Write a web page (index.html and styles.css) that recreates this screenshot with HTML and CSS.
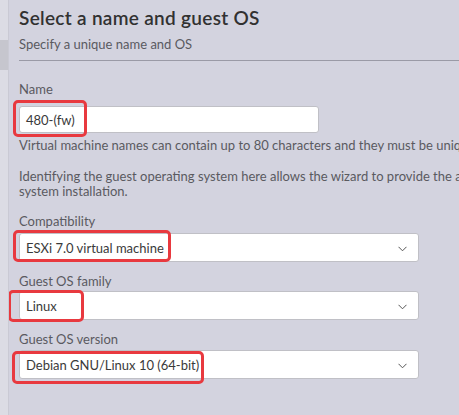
FILE: index.html
```html
<!DOCTYPE html>
<html>
<head>
<meta charset="utf-8">
<link rel="stylesheet" href="styles.css">
</head>
<body>
<div class="page">
  <aside class="rail"><div class="rail-block"></div></aside>
  <main class="content">
    <h1 class="title">Select a name and guest OS</h1>
    <p class="subtitle">Specify a unique name and OS</p>
    <div class="rule"></div>

    <div class="field field-name">
      <label class="label">Name</label>
      <div class="control">
        <div class="input text-input">480-(fw)</div>
        <span class="mark mark-name"></span>
      </div>
    </div>
    <p class="help help-name">Virtual machine names can contain up to 80 characters and they must be unique within each vCenter Server VM folder.</p>
    <p class="help help-os">Identifying the guest operating system here allows the wizard to provide the appropriate defaults for the operating<br>system installation.</p>

    <div class="field field-compat">
      <label class="label">Compatibility</label>
      <div class="control">
        <div class="input select">ESXi 7.0 virtual machine<svg class="chev" width="9" height="6" viewBox="0 0 9 6"><path d="M0.5 0.8 L4.5 4.8 L8.5 0.8" fill="none" stroke="#555" stroke-width="1"/></svg></div>
        <span class="mark mark-compat"></span>
      </div>
    </div>

    <div class="field field-family">
      <label class="label">Guest OS family</label>
      <div class="control">
        <div class="input select">Linux<svg class="chev" width="9" height="6" viewBox="0 0 9 6"><path d="M0.5 0.8 L4.5 4.8 L8.5 0.8" fill="none" stroke="#555" stroke-width="1"/></svg></div>
        <span class="mark mark-family"></span>
      </div>
    </div>

    <div class="field field-version">
      <label class="label">Guest OS version</label>
      <div class="control">
        <div class="input select">Debian GNU/Linux 10 (64-bit)<svg class="chev" width="9" height="6" viewBox="0 0 9 6"><path d="M0.5 0.8 L4.5 4.8 L8.5 0.8" fill="none" stroke="#555" stroke-width="1"/></svg></div>
        <span class="mark mark-version"></span>
      </div>
    </div>
  </main>
</div>
</body>
</html>
```
FILE: styles.css
```css
html, body {
  margin: 0;
  padding: 0;
  background: #d3d3df;
}
body {
  width: 459px;
  height: 415px;
  overflow: hidden;
  font-family: "Lato", "Open Sans", sans-serif;
  color: #5a5a5f;
}
.page {
  display: flex;
  height: 415px;
}
.rail {
  width: 8px;
  flex: none;
  background: #dcdce4;
  border-right: 1px solid #cacad4;
  padding-top: 40px;
}
.rail-block {
  height: 30px;
  background: #c6c6ce;
}
.content {
  flex: 1;
  padding-left: 10px;
  min-width: 0;
  white-space: nowrap;
  overflow: hidden;
}
.title {
  margin: 6px 0 0;
  font-size: 19px;
  line-height: 24px;
  font-weight: 600;
  color: #313131;
  letter-spacing: 0.3px;
}
.subtitle {
  margin: 6px 0 0;
  font-size: 13px;
  line-height: 16px;
}
.rule {
  margin-top: 8px;
  height: 1px;
  background: #9a9aa6;
}
.field {
  display: flex;
  flex-direction: column;
}
.label {
  font-size: 13px;
  line-height: 16px;
}
.control {
  position: relative;
}
.input {
  box-sizing: border-box;
  background: #fff;
  border: 1px solid #c0c0c6;
  border-radius: 3px;
  font-size: 13px;
  color: #3a3a3a;
  padding-left: 6px;
  display: flex;
  align-items: center;
}
.text-input {
  width: 300px;
  height: 27px;
}
.select {
  width: 400px;
  height: 29px;
  position: relative;
}
.chev {
  position: absolute;
  right: 11px;
  top: 12px;
}
.mark {
  position: absolute;
  border: 3px solid #e8393f;
  border-radius: 5px;
  box-sizing: border-box;
}
.mark-name { left: -6px; top: -6px; width: 74px; height: 37px; }
.mark-compat { left: -6px; top: -3px; width: 158px; height: 32px; }
.mark-family { left: -11px; top: -1px; width: 76px; height: 32px; }
.mark-version { left: -7px; top: 1px; width: 192px; height: 33px; }

.field-name { margin-top: 20px; }
.field-name .control { margin-top: 9px; }

.help {
  margin: 0;
  font-size: 13px;
}
.help-name { margin-top: 4px; line-height: 16px; }
.help-os { margin-top: 16px; line-height: 15px; }

.field-compat { margin-top: 14px; }
.field-compat .control { margin-top: 4px; }
.field-family { margin-top: 11px; }
.field-family .control { margin-top: 2px; }
.field-version { margin-top: 11px; }
.field-version .control { margin-top: 3px; }
```
